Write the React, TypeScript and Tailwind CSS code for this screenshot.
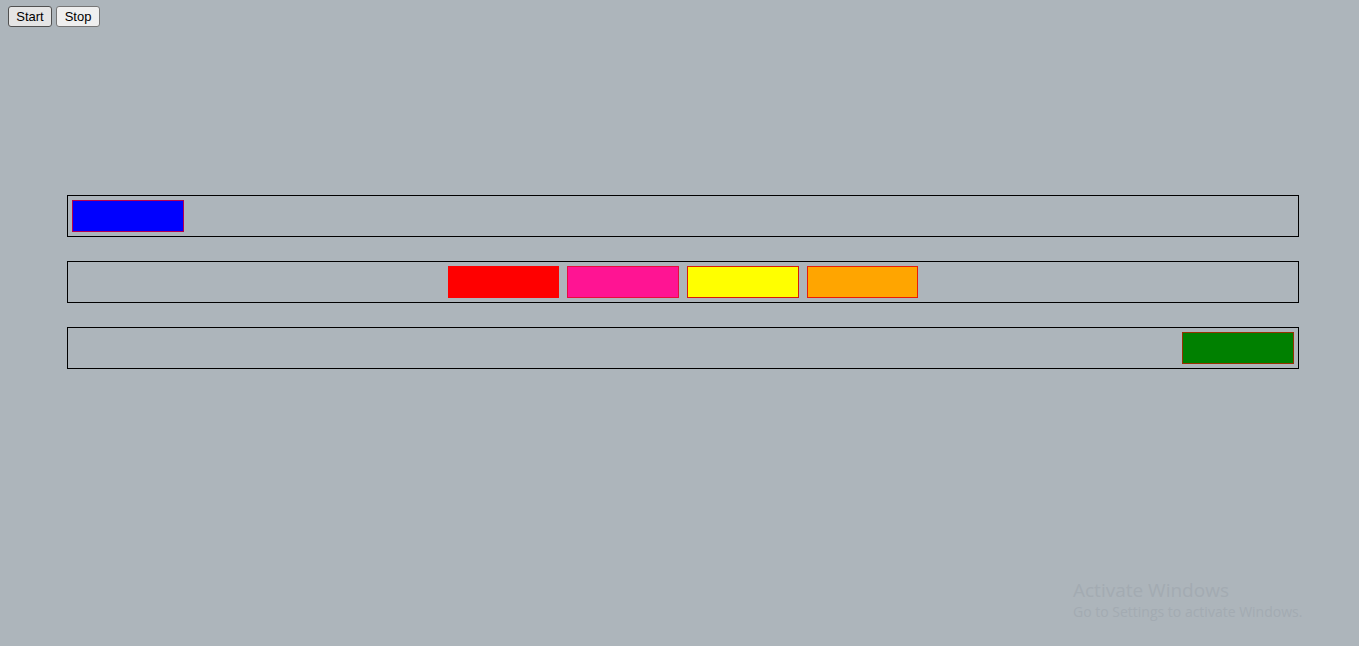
import type { ReactNode } from "react";

function ControlButton({ tone, children }: { tone: string; children: ReactNode }) {
  return (
    <button
      type="button"
      className={`h-[21px] w-11 rounded-[3px] border text-center text-[13px] leading-none text-black ${tone}`}
    >
      {children}
    </button>
  );
}

function Track({ align, children }: { align: string; children: ReactNode }) {
  return <section className={`flex gap-2 border border-black p-1 ${align}`}>{children}</section>;
}

function Block({ tone }: { tone: string }) {
  return <div className={`h-8 w-[9.13%] border ${tone}`} />;
}

export default function App() {
  return (
    <div className="relative min-h-screen bg-[#adb5bb] font-['Liberation_Sans',Arial,sans-serif]">
      <header className="flex gap-1 px-2 pt-1.5">
        <ControlButton tone="border-[#505050] bg-[#e5e5e5]">Start</ControlButton>
        <ControlButton tone="border-[#767676] bg-[#efefef]">Stop</ControlButton>
      </header>

      <main className="mt-[168px] mr-[60px] ml-[67px] flex flex-col gap-6">
        <Track align="justify-start">
          <Block tone="border-[#b40050] bg-[#0000ff]" />
        </Track>
        <Track align="justify-center">
          <Block tone="border-[#ff0000] bg-[#ff0000]" />
          <Block tone="border-[#e80c3c] bg-[#ff1493]" />
          <Block tone="border-[#d81c08] bg-[#ffff00]" />
          <Block tone="border-[#e81c08] bg-[#ffa500]" />
        </Track>
        <Track align="justify-end">
          <Block tone="border-[#963200] bg-[#008000]" />
        </Track>
      </main>

      <aside className="absolute right-[50px] bottom-6 w-[236px] font-['Open_Sans','Noto_Sans',sans-serif] whitespace-nowrap text-[#a3abb2]">
        <p className="text-[19px] leading-6">Activate Windows</p>
        <p className="text-[14px] leading-5">Go to Settings to activate Windows.</p>
      </aside>
    </div>
  );
}
